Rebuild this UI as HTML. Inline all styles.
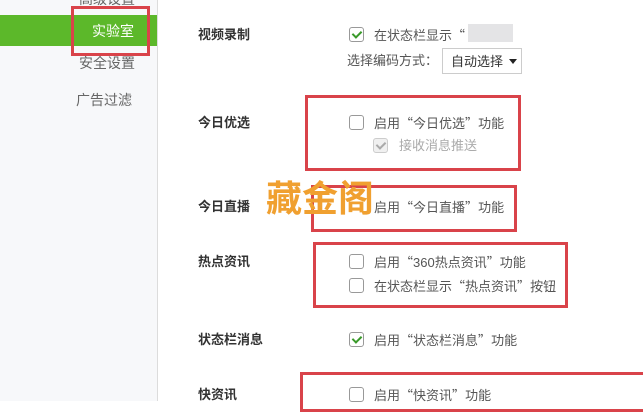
<!DOCTYPE html>
<html><head><meta charset="utf-8"><style>
body{margin:0;width:643px;height:401px;overflow:hidden;background:#fff;font-family:"Liberation Sans","Noto Sans CJK SC",sans-serif;position:relative}
.a{position:absolute;white-space:nowrap;line-height:1}
.q{font-family:"Noto Sans CJK SC",sans-serif}
.side{position:absolute;left:0;top:0;width:157px;height:401px;background:#f7f8fa;border-right:1px solid #dcdcdc}
.st{font-size:14px;color:#666}
.lb{font-size:13px;font-weight:bold;color:#333}
.tx{font-size:13px;color:#555}
.cb{position:absolute;width:15px;height:15px;border:1px solid #999;border-radius:3px;background:#fff;box-sizing:border-box}
.ck::after{content:"";position:absolute;left:4px;top:1px;width:4px;height:7px;border:solid #3a9a2a;border-width:0 2px 2px 0;transform:rotate(45deg)}
.dis{border-color:#ccc;background:#f0f0f0}
.dis::after{border-color:#aaa}
.rb{position:absolute;border:3px solid #d9434a;box-sizing:border-box}
</style></head><body>
<div class="side"></div>
<div class="a st" style="left:79px;top:-8px">高级设置</div>
<div style="position:absolute;left:0;top:15px;width:157px;height:31px;background:#5cb82a"></div>
<div class="a st" style="left:92px;top:24px;color:#fff">实验室</div>
<div class="a st" style="left:79px;top:56px">安全设置</div>
<div class="a st" style="left:76px;top:93px">广告过滤</div>
<div class="rb" style="left:71px;top:6px;width:79px;height:50px"></div>

<div class="a lb" style="left:198px;top:28px">视频录制</div>
<div class="cb ck" style="left:349px;top:27px"></div>
<div class="a tx" style="left:374px;top:28px">在状态栏显示<span class="q">“</span></div>
<div style="position:absolute;left:468px;top:24px;width:45px;height:18px;background:#e4e4e6"></div>
<div class="a tx" style="left:347px;top:54px">选择编码方式：</div>
<div style="position:absolute;left:442px;top:48px;width:80px;height:26px;border:1px solid #ccc;box-sizing:border-box"></div>
<div class="a tx" style="left:451px;top:55px;color:#333">自动选择</div>
<div style="position:absolute;left:509px;top:59px;border:4px solid transparent;border-top:5px solid #222"></div>

<div class="a lb" style="left:198px;top:116px">今日优选</div>
<div class="cb" style="left:349px;top:115px"></div>
<div class="a tx" style="left:374px;top:116px">启用<span class="q">“</span>今日优选<span class="q">”</span>功能</div>
<div class="cb ck dis" style="left:373px;top:138px"></div>
<div class="a tx" style="left:399px;top:139px;color:#aaa">接收消息推送</div>
<div class="rb" style="left:305px;top:95px;width:216px;height:76px"></div>

<div class="a lb" style="left:198px;top:200px">今日直播</div>
<div class="a tx" style="left:374px;top:200px">启用<span class="q">“</span>今日直播<span class="q">”</span>功能</div>
<div class="rb" style="left:311px;top:185px;width:206px;height:47px"></div>
<div class="a" style="left:266px;top:181px;font-size:36px;font-weight:bold;color:#f0a030;letter-spacing:0px">藏金阁</div>

<div class="a lb" style="left:198px;top:255px">热点资讯</div>
<div class="cb" style="left:349px;top:254px"></div>
<div class="a tx" style="left:374px;top:255px">启用<span class="q">“</span>360热点资讯<span class="q">”</span>功能</div>
<div class="cb" style="left:349px;top:278px"></div>
<div class="a tx" style="left:374px;top:279px">在状态栏显示<span class="q">“</span>热点资讯<span class="q">”</span>按钮</div>
<div class="rb" style="left:313px;top:242px;width:255px;height:66px"></div>

<div class="a lb" style="left:198px;top:333px">状态栏消息</div>
<div class="cb ck" style="left:349px;top:332px"></div>
<div class="a tx" style="left:374px;top:333px">启用<span class="q">“</span>状态栏消息<span class="q">”</span>功能</div>

<div class="a lb" style="left:198px;top:388px">快资讯</div>
<div class="cb" style="left:349px;top:387px"></div>
<div class="a tx" style="left:374px;top:388px">启用<span class="q">“</span>快资讯<span class="q">”</span>功能</div>
<div class="rb" style="left:300px;top:372px;width:350px;height:40px"></div>
</body></html>
